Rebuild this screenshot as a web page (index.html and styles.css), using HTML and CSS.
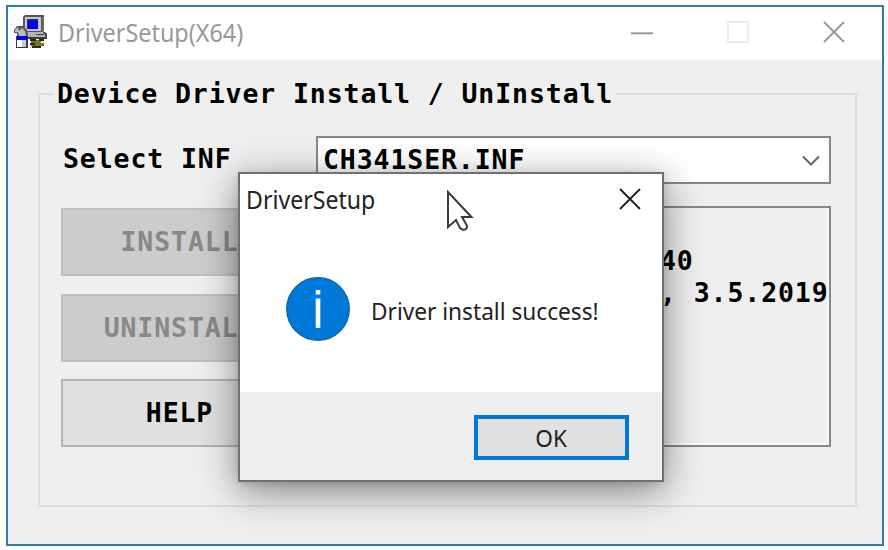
FILE: index.html
```
<!DOCTYPE html>
<html lang="en">
<head>
<meta charset="utf-8">
<title>DriverSetup(X64)</title>
<link rel="stylesheet" href="styles.css">
</head>
<body>
<main class="window">
  <header class="titlebar">
    <svg class="app-icon" width="34" height="34" viewBox="0 0 34 34">
      <path d="M11 0h19v17H9V2z" fill="#555"/>
      <path d="M11 2h16v14H11z" fill="#c8c8c8"/>
      <path d="M28 2h2v15h-2z" fill="#6e6e6e"/>
      <path d="M13 4h11v10H13z" fill="#2a2a6a"/>
      <path d="M14 6h10v8H14z" fill="#0000ff"/>
      <path d="M13 17h18l2 2v5H13z" fill="#3c3c3c"/>
      <path d="M13 17h16l3 5H14z" fill="#b4b4b4"/>
      <path d="M22 19h8v1h-8z" fill="#444"/>
      <path d="M17 25h12l-3 3h4v3H17z" fill="#77721f"/>
      <path d="M16 24h6v2h-6zM25 24h5v2h-5zM18 31h9v2h-9zM16 28h5v2h-5z" fill="#292914"/>
      <path d="M0 15l3-4h6l4 4 1 7H3v-4H0z" fill="#555"/>
      <path d="M1 15l3-3 1 4 3-3 3 3 1 5H5l-1-4H1z" fill="#bcbcbc"/>
      <path d="M2 21h12v12H2z" fill="#3a3a3a"/>
      <path d="M3 25h5v7H3z" fill="#fff"/>
      <path d="M8 25h4v7H8z" fill="#c4c6e2"/>
      <path d="M3 21h10v4H3z" fill="#0000f0"/>
    </svg>
    <h1 class="caption">DriverSetup(X64)</h1>
    <div class="controls">
      <svg width="22" height="22" viewBox="0 0 22 22"><path d="M0 12.300h22" stroke="#999" stroke-width="2"/></svg>
      <svg width="22" height="22" viewBox="0 0 22 22"><path d="M1 1h20v20H1z" fill="none" stroke="#ebebeb" stroke-width="2"/></svg>
      <svg width="22" height="22" viewBox="0 0 22 22"><path d="M1 1l20 20M21 1L1 21" stroke="#999" stroke-width="2"/></svg>
    </div>
  </header>
  <fieldset class="group">
    <legend class="mono">Device Driver Install / UnInstall</legend>
    <div class="form">
      <label class="mono label">Select INF</label>
      <div class="select mono">
        <span>CH341SER.INF</span>
        <svg width="18" height="12" viewBox="0 0 18 12"><path d="M1 2.500l8 8 8-8" fill="none" stroke="#666" stroke-width="2"/></svg>
      </div>
      <div class="actions">
        <button class="action mono" disabled>INSTALL</button>
        <button class="action mono" disabled>UNINSTALL</button>
        <button class="action mono">HELP</button>
      </div>
      <div class="info mono"><span>40</span><span>, 3.5.2019</span></div>
    </div>
  </fieldset>
</main>
<section class="dialog">
  <header class="dialog-head">
    <h2 class="dialog-title">DriverSetup</h2>
    <svg width="22" height="22" viewBox="0 0 22 22"><path d="M1 1l20 20M21 1L1 21" stroke="#222" stroke-width="1.900"/></svg>
  </header>
  <div class="message">
    <svg width="64" height="64" viewBox="0 0 64 64"><circle cx="32" cy="32" r="31.300" fill="#0078d7" stroke="#0864a8" stroke-width="1.300"/><path d="M29.700 13h4.600v4.600h-4.600zM29.700 21.500h4.600V51h-4.600z" fill="#fff"/></svg>
    <p class="message-text">Driver install success!</p>
  </div>
  <footer class="dialog-foot"><button class="ok"><span>OK</span></button></footer>
</section>
<svg class="cursor" width="28" height="42" viewBox="0 0 28 42"><path d="M2 2v35l8-7 4 8q3 3 6 1 2-2 0-5l-4-7h9.500z" fill="#fff" stroke="#383842" stroke-width="2"/></svg>
</body>
</html>
```
FILE: styles.css
```
* { box-sizing: border-box; }
body {
  margin: 0;
  padding: 5px 4px 4px 6px;
  height: 550px;
  overflow: hidden;
  background: #fff;
  font-family: "Noto Sans", "Open Sans", sans-serif;
}
h1, h2, p { margin: 0; font-weight: 400; white-space: nowrap; transform-origin: left center; }
svg { display: block; flex: none; }
button { font: inherit; color: inherit; border-radius: 0; margin: 0; }
.mono {
  font: bold 26.5px/32px "DejaVu Sans Mono", monospace;
  letter-spacing: .9px;
  white-space: pre;
}
.window {
  height: 541px;
  border: 2px solid #2f7dab;
  background: #efefef;
  display: flex;
  flex-direction: column;
}
.titlebar {
  height: 53px;
  flex: none;
  background: #fff;
  display: flex;
  align-items: center;
  padding: 0 37px 3px 6px;
}
.caption { font-size: 25px; line-height: 34px; color: #999; margin-left: 10px; transform: scaleX(.935); }
.controls { display: flex; gap: 74px; margin-left: auto; }
.group {
  margin: 18px 25px 37px 30px;
  height: 429px;
  padding: 0;
  min-width: 0;
  border: 2px solid #dedede;
}
.group legend { margin-left: 14px; padding: 0 2px 0 3px; }
.form {
  display: grid;
  grid-template-columns: 237px 515px;
  grid-template-rows: 48px 241px;
  gap: 22px 18px;
  padding: 26px 0 0 21px;
}
.label { padding: 7px 0 0 2px; }
.select {
  display: flex;
  align-items: center;
  justify-content: space-between;
  padding: 0 9px 1px 5px;
  border: 2px solid #888;
  background: #fff;
}
.actions { display: flex; flex-direction: column; justify-content: space-between; padding-top: 2px; }
.action { height: 68px; padding: 0; border: 2px solid #b4b4b4; background: #e1e1e1; color: #000; }
.action:disabled { border-color: #bfbfbf; background: #ccc; color: #888; }
.info {
  display: flex;
  flex-direction: column;
  padding: 37px 0 0 342px;
  border: 2px solid #888;
  box-shadow: inset -2px -2px #fafafa;
  overflow: hidden;
}
.dialog {
  position: absolute;
  left: 238px;
  top: 172px;
  width: 426px;
  height: 310px;
  border: 2px solid #707070;
  background: #fff;
  box-shadow: 0 9px 36px rgba(0, 0, 0, .46), 0 2px 8px rgba(0, 0, 0, .1);
  display: flex;
  flex-direction: column;
}
.dialog-head { height: 50px; display: flex; justify-content: space-between; align-items: center; padding: 0 21px 0 6px; }
.dialog-title { font-size: 25px; line-height: 34px; color: #222; transform: scaleX(.925); }
.message { height: 168px; display: flex; align-items: center; gap: 21px; padding: 2px 0 0 46px; }
.message-text { font-size: 23px; line-height: 34px; color: #222; transform: scaleX(.985); padding-top: 3px; }
.dialog-foot { flex: 1; background: #efefef; display: flex; justify-content: flex-end; padding: 23px 33px 0 0; }
.ok { width: 155px; height: 45px; padding: 0; border: 4px solid #0078d7; background: #e1e1e1; color: #222; font-size: 23px; line-height: 30px; }
.ok span { display: inline-block; transform: scaleX(.98); }
.cursor { position: absolute; left: 446px; top: 190px; }
```
